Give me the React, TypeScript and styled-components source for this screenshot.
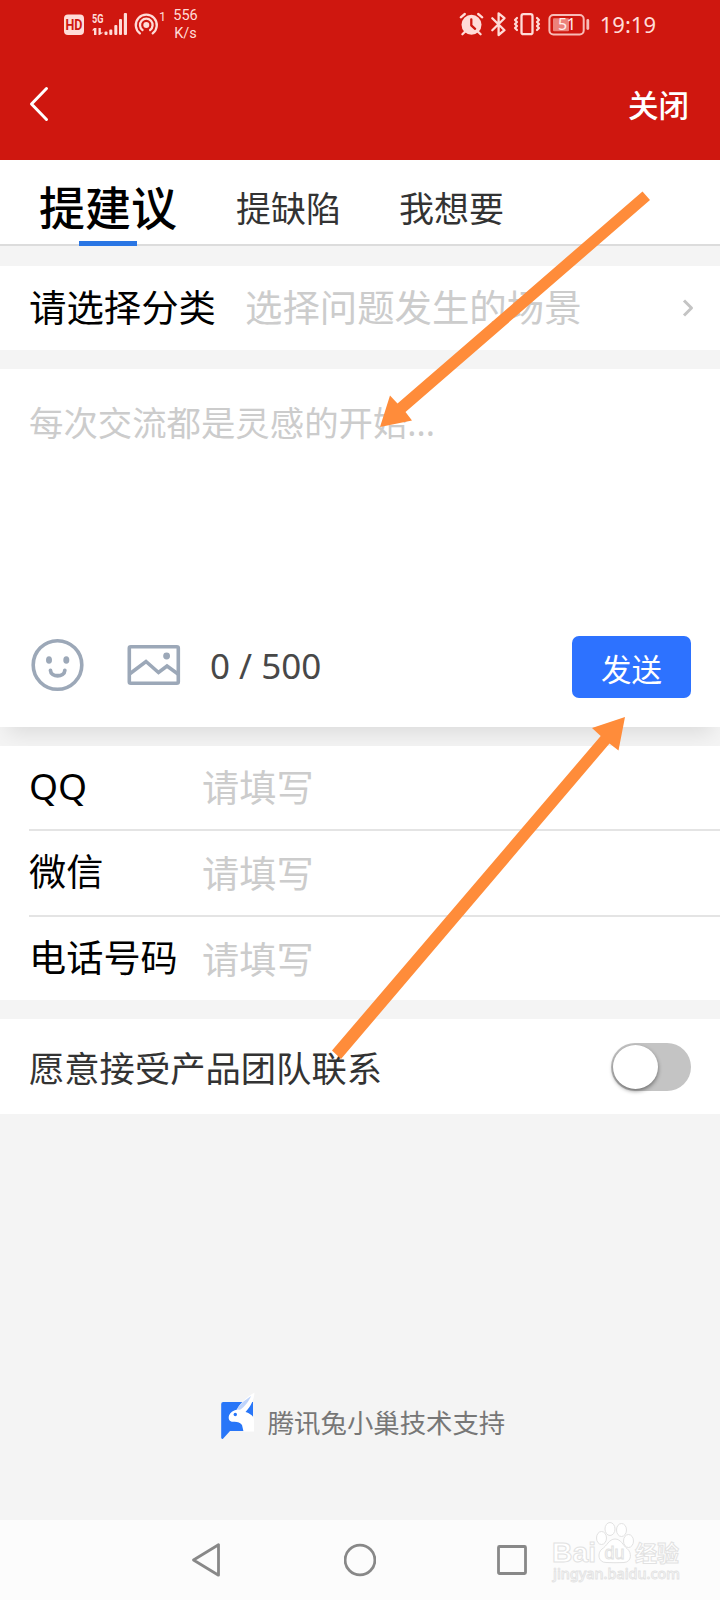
import React, { useState } from "react";
import styled, { createGlobalStyle } from "styled-components";

const GlobalStyle = createGlobalStyle`
  * { box-sizing: border-box; }
  html, body { margin: 0; padding: 0; background: #f4f4f4; }
  body {
    font-family: "Noto Sans CJK SC", "Noto Sans", sans-serif;
    line-height: 1;
    color: #000;
    overflow: hidden;
  }
  button, input, textarea { font-family: inherit; border: 0; padding: 0; margin: 0; background: none; outline: 0; }
`;

const latinFirst = `"Noto Sans", "Noto Sans CJK SC", sans-serif`;

const Screen = styled.div`
  position: relative;
  display: flex;
  flex-direction: column;
  width: 720px;
  height: 1600px;
  background: #f4f4f4;
  overflow: hidden;
`;

const Header = styled.header`
  display: flex;
  flex-direction: column;
  flex: none;
  height: 160px;
  background: #cf170f;
  color: #fff;
`;

const StatusBar = styled.div`
  display: flex;
  justify-content: space-between;
  height: 50px;
  padding: 0 64px 0 60px;
  color: #ffdcd8;
`;

const StatusGroup = styled.div`
  display: flex;
  align-items: flex-start;
`;

const NetSpeed = styled.div`
  padding: 7px 0 0 0;
  width: 31px;
  text-align: center;
  font: 14.5px/17.5px Roboto, sans-serif;
`;

const Clock = styled.time`
  padding: 11px 0 0 0;
  font: 22px/26px "Noto Sans", sans-serif;
`;

const NavRow = styled.div`
  display: flex;
  justify-content: space-between;
  align-items: center;
  height: 110px;
  padding: 0 31px 2px 27px;
`;

const CloseButton = styled.button`
  color: #fff;
  font-size: 30.5px;
  font-weight: 500;
  line-height: 1;
`;

const Tabs = styled.nav`
  display: flex;
  flex: none;
  height: 86px;
  padding-left: 39px;
  background: #fff;
  border-bottom: 2px solid #dcdcdc;
`;

const Tab = styled.button<{ $active?: boolean }>`
  display: flex;
  align-items: center;
  justify-content: center;
  position: relative;
  height: 86px;
  margin-right: ${(p) => (p.$active ? 59 : 58)}px;
  padding-top: ${(p) => (p.$active ? 4 : 7)}px;
  font-size: ${(p) => (p.$active ? 46 : 35)}px;
  font-weight: ${(p) => (p.$active ? 500 : 400)};
  color: ${(p) => (p.$active ? "#000" : "#333")};
  line-height: 1;
  &::after {
    content: "";
    display: ${(p) => (p.$active ? "block" : "none")};
    position: absolute;
    left: 40px;
    bottom: 0;
    width: 58px;
    height: 5px;
    background: #2a76e4;
  }
`;

const CategoryRow = styled.section`
  display: flex;
  align-items: center;
  flex: none;
  height: 84px;
  margin-top: 20px;
  padding: 0 26px 0 29px;
  background: #fff;
  font-size: 37.4px;
`;

const CategoryLabel = styled.span`
  width: 216px;
  padding-bottom: 2px;
`;

const CategoryHint = styled.span`
  flex: 1;
  padding-bottom: 2px;
  color: #ccc;
`;

const Composer = styled.section`
  position: relative;
  display: flex;
  flex-direction: column;
  flex: none;
  height: 358px;
  margin-top: 19px;
  background: #fff;
  box-shadow: 0 14px 20px -8px rgba(0, 0, 0, 0.1);
`;

const Message = styled.textarea`
  display: block;
  height: 240px;
  padding: 35px 29px 0;
  font-family: ${latinFirst};
  font-size: 34.4px;
  line-height: 1.1;
  resize: none;
  &::placeholder { color: #ccc; opacity: 1; }
`;

const ComposerBar = styled.div`
  display: flex;
  align-items: center;
  height: 118px;
  padding: 0 29px 2px 29px;
`;

const IconSlot = styled.span<{ $gap: number }>`
  display: flex;
  padding-bottom: 4px;
  margin-right: ${(p) => p.$gap}px;
`;

const Counter = styled.span`
  flex: 1;
  padding-bottom: 4px;
  font-family: ${latinFirst};
  font-size: 35px;
  color: #484848;
`;

const SendButton = styled.button`
  width: 119px;
  height: 62px;
  padding-top: 4px;
  margin-top: -1px;
  border-radius: 7px;
  background: #2d72ff;
  color: #fff;
  font-size: 30.5px;
  line-height: 1;
`;

const Contacts = styled.section`
  position: relative;
  flex: none;
  height: 254px;
  margin-top: 19px;
  padding-left: 29px;
  background: #fff;
`;

const ContactRow = styled.label`
  display: flex;
  align-items: center;
  height: 86px;
  padding-bottom: 3px;
  font-size: 37.2px;
  border-bottom: 2px solid #e4e4e4;
  &:first-child { height: 85px; }
  &:last-child { border-bottom: 0; height: 83px; padding-bottom: 2px; }
`;

const ContactName = styled.span`
  width: 173px;
  font-family: ${latinFirst};
`;

const ContactInput = styled.input`
  flex: 1;
  height: 60px;
  font-size: 37.2px;
  &::placeholder { color: #ccc; opacity: 1; }
`;

const ConsentRow = styled.section`
  display: flex;
  align-items: center;
  justify-content: space-between;
  flex: none;
  height: 95px;
  margin-top: 19px;
  padding: 0 29px 0 29px;
  background: #fff;
  color: #333;
  font-size: 35.3px;
`;

const Toggle = styled.button<{ $on: boolean }>`
  display: flex;
  align-items: center;
  justify-content: ${(p) => (p.$on ? "flex-end" : "flex-start")};
  width: 80px;
  height: 48px;
  padding: 0 2px;
  border-radius: 24px;
  background: ${(p) => (p.$on ? "#2d72ff" : "#c4c4c4")};
`;

const Knob = styled.span`
  width: 45px;
  height: 44px;
  border-radius: 50%;
  background: #fff;
  box-shadow: 0 2px 4px rgba(0, 0, 0, 0.45);
`;

const Credit = styled.footer`
  display: flex;
  flex: 1;
  align-items: flex-end;
  justify-content: center;
  padding: 0 0 80px 5px;
  color: #777;
  font-size: 26.4px;
`;

const CreditText = styled.span`
  margin: 0 0 5px 10px;
`;

const SystemNav = styled.div`
  position: relative;
  display: flex;
  align-items: center;
  justify-content: center;
  flex: none;
  gap: 120px;
  height: 80px;
  background: #fcfcfc;
`;

const Watermark = styled.div`
  position: absolute;
  left: 550px;
  top: 0;
  width: 140px;
  height: 70px;
`;

const Annotations = styled.svg`
  position: absolute;
  inset: 0;
  pointer-events: none;
`;

const StatusLeft = () => (
  <svg width="110" height="50" viewBox="60 0 110 50" fill="#ffdcd8">
    <rect x="64" y="14.5" width="20" height="20.5" rx="4" />
    <text x="74" y="29.8" textAnchor="middle" fontFamily="Roboto" fontWeight="700" fontSize="14" textLength="17" lengthAdjust="spacingAndGlyphs" fill="#cf170f">HD</text>
    <text x="92" y="23" fontFamily="Roboto" fontWeight="700" fontSize="13.500" textLength="11.5" lengthAdjust="spacingAndGlyphs">5G</text>
    <path d="M94 28h2.400v7H94v-4.500h-2zM98.500 28h2.300v4.500h2.700L99.500 35h-1z" />
    <rect x="104.500" y="31.500" width="3" height="3.500" rx="1" />
    <rect x="109.300" y="29.500" width="3" height="5.500" rx="1" />
    <rect x="114.300" y="25" width="3" height="10" rx="1" />
    <rect x="119" y="19" width="3" height="16" rx="1" />
    <rect x="123.800" y="13" width="3.200" height="22" rx="1" />
    <circle cx="146.300" cy="25" r="3" />
    <g fill="none" stroke="#ffdcd8" strokeWidth="2.300" strokeLinecap="round">
      <path d="M142.500 30a6.300 6.300 0 1 1 7.600 0" />
      <path d="M139.900 33.400a10.500 10.500 0 1 1 12.800 0" />
    </g>
    <text x="159" y="20.500" fontFamily="Roboto" fontSize="12.500">1</text>
  </svg>
);

const StatusRight = () => (
  <svg width="146" height="50" viewBox="454 0 146 50" fill="none" stroke="#ffdcd8" strokeWidth="2.300" strokeLinecap="round" strokeLinejoin="round">
    <circle cx="471.500" cy="24.800" r="10" fill="#ffdcd8" stroke="none" />
    <path d="M460.800 17.300l4-3.300M482.200 17.300l-4-3.300M465.200 31.500l-2.800 2.800M477.800 31.500l2.800 2.800" />
    <path d="M471.300 19.300v6l3.800 3.500" stroke="#cf170f" />
    <path d="M492.300 18.200L504.500 30.200L498.600 35V13.300L504.500 18.200L492.300 30.200" strokeWidth="2.300" />
    <rect x="521.500" y="14.200" width="11" height="20" rx="2" />
    <path d="M517 18l-2 2 2 2-2 2 2 2-2 2 2 2M537 18l2 2-2 2 2 2-2 2 2 2-2 2" strokeWidth="2.200" />
    <rect x="549.400" y="15" width="34.300" height="19.500" rx="4" strokeWidth="2" stroke="#f8bcb7" />
    <rect x="553" y="18.300" width="16" height="13" rx="1" fill="#ec827b" stroke="none" />
    <path d="M587.800 20.500v8" strokeWidth="2.800" stroke="#f8bcb7" />
    <text x="567" y="30.300" textAnchor="middle" fontFamily="Noto Sans" fontSize="16" textLength="18" fill="#fff0ee" stroke="none">51</text>
  </svg>
);

const BackIcon = () => (
  <svg width="24" height="40" viewBox="0 0 24 40" fill="none" stroke="#fff" strokeWidth="3" strokeLinecap="round" strokeLinejoin="round">
    <path d="M19.500 4.500L4.500 20L19.500 35.500" />
  </svg>
);

const ChevronIcon = () => (
  <svg width="12" height="20" viewBox="0 0 12 20" fill="none" stroke="#c4c4c4" strokeWidth="3" strokeLinejoin="round">
    <path d="M2 2.500L9.500 10L2 17.500" />
  </svg>
);

const SmileIcon = () => (
  <svg width="58" height="56" viewBox="0 0 58 56" fill="none" stroke="#9ca8b8" strokeWidth="3.600">
    <circle cx="28.500" cy="28" r="24.300" />
    <ellipse cx="20" cy="23" rx="3" ry="3.800" fill="#9ca8b8" stroke="none" />
    <ellipse cx="37.300" cy="23" rx="3" ry="3.800" fill="#9ca8b8" stroke="none" />
    <path d="M21.500 33.500c.3 7 14 7 14.300 0" strokeWidth="3.800" strokeLinecap="round" />
  </svg>
);

const ImageIcon = () => (
  <svg width="54" height="42" viewBox="0 0 54 42" fill="none" stroke="#9ca8b8" strokeWidth="3.600">
    <rect x="2.300" y="2.800" width="49" height="36.500" rx="1.500" />
    <path d="M2.500 30L19 17.500L31.500 28.500L40 22L51 30" />
    <circle cx="39.600" cy="12" r="3.400" fill="#9ca8b8" stroke="none" />
  </svg>
);

const RabbitLogo = () => (
  <svg width="38" height="50" viewBox="0 0 38 50">
    <path d="M3.500 12H33V41H10L3 48.800a1.200 1.200 0 0 1-1.800-1V14a2 2 0 0 1 2-2z" fill="#2876f8" />
    <path d="M34.500 2.500C28 6 20 13 17 19.500c-4 1-7 3-8 6-1 3.500.5 6.500 4.500 6.300 4-.2 6.500.7 8.500 3.200L23.500 41.500H34V30c0-4-4-6.500-8.500-8C31 16 34 10 34.500 2.500z" fill="#fff" />
    <path d="M31 6C24.500 10.500 18.500 15 17 19.500l3 .2C25 16.500 29 11 31 6z" fill="#bfd4fb" />
    <circle cx="15.300" cy="24.500" r="1.700" fill="#2876f8" />
  </svg>
);

const NavIcon = styled.svg`
  width: 32px;
  height: 36px;
  fill: none;
  stroke: #888;
  stroke-width: 2.8;
  stroke-linejoin: round;
`;

const App = () => {
  const [consent, setConsent] = useState(false);
  const contacts = ["QQ", "微信", "电话号码"];

  return (
    <Screen>
      <GlobalStyle />
      <Header>
        <StatusBar>
          <StatusGroup>
            <StatusLeft />
            <NetSpeed>556<br />K/s</NetSpeed>
          </StatusGroup>
          <StatusGroup>
            <StatusRight />
            <Clock>19:19</Clock>
          </StatusGroup>
        </StatusBar>
        <NavRow>
          <BackIcon />
          <CloseButton>关闭</CloseButton>
        </NavRow>
      </Header>

      <Tabs>
        <Tab $active>提建议</Tab>
        <Tab>提缺陷</Tab>
        <Tab>我想要</Tab>
      </Tabs>

      <CategoryRow>
        <CategoryLabel>请选择分类</CategoryLabel>
        <CategoryHint>选择问题发生的场景</CategoryHint>
        <ChevronIcon />
      </CategoryRow>

      <Composer>
        <Message placeholder="每次交流都是灵感的开始..." />
        <ComposerBar>
          <IconSlot $gap={40}><SmileIcon /></IconSlot>
          <IconSlot $gap={29}><ImageIcon /></IconSlot>
          <Counter>0 / 500</Counter>
          <SendButton>发送</SendButton>
        </ComposerBar>
      </Composer>

      <Contacts>
        {contacts.map((name) => (
          <ContactRow key={name}>
            <ContactName>{name}</ContactName>
            <ContactInput placeholder="请填写" />
          </ContactRow>
        ))}
      </Contacts>

      <ConsentRow>
        愿意接受产品团队联系
        <Toggle $on={consent} onClick={() => setConsent(!consent)}>
          <Knob />
        </Toggle>
      </ConsentRow>

      <Credit>
        <RabbitLogo />
        <CreditText>腾讯兔小巢技术支持</CreditText>
      </Credit>

      <SystemNav>
        <NavIcon viewBox="0 0 32 36"><path d="M26.500 2.800V33.200L1.500 18z" /></NavIcon>
        <NavIcon viewBox="0 0 32 36"><circle cx="16" cy="18" r="14.900" /></NavIcon>
        <NavIcon viewBox="0 0 32 36"><rect x="2.500" y="4.500" width="27" height="27" rx="1" /></NavIcon>
        <Watermark>
          <svg width="140" height="70" viewBox="550 1520 140 70" fill="#fff" stroke="#e2e2e2" strokeWidth="1">
            <text x="552" y="1561.500" fontFamily="Liberation Sans" fontWeight="700" fontSize="28" textLength="44" lengthAdjust="spacingAndGlyphs">Bai</text>
            <ellipse cx="601.500" cy="1538" rx="5" ry="6.500" />
            <ellipse cx="610" cy="1529" rx="5" ry="6.500" />
            <ellipse cx="621.500" cy="1530" rx="5" ry="6.500" />
            <ellipse cx="628.500" cy="1541" rx="5" ry="6.500" />
            <path d="M615 1539c-6 0-8 7-13 10-5 4-4 13.500 4 13.500 6 .3 12 .3 18 0 8-.5 8-10 3-14-4-3-6-9.500-12-9.500z" />
            <text x="604.500" y="1559" fontFamily="Liberation Sans" fontSize="19" textLength="20" lengthAdjust="spacingAndGlyphs">du</text>
            <text x="635" y="1560.500" fontFamily="Noto Sans CJK SC" fontWeight="700" fontSize="22" textLength="44">经验</text>
            <text x="553" y="1579" fontFamily="Noto Sans" fontWeight="500" fontSize="14" textLength="127" lengthAdjust="spacingAndGlyphs" fill="#fafafa" strokeWidth=".8">jingyan.baidu.com</text>
          </svg>
        </Watermark>
      </SystemNav>

      <Annotations width="720" height="1600" viewBox="0 0 720 1600" fill="#ff8c3a">
        <path d="M380 427L390 395.500L397.500 403.500L642.500 191.500L650 200L405.500 412L412 420.500z" />
        <path d="M625 717L592 728L600.700 736L332 1050.500L341 1059L609.500 743.500L618.500 750.500z" />
      </Annotations>
    </Screen>
  );
};

export default App;
